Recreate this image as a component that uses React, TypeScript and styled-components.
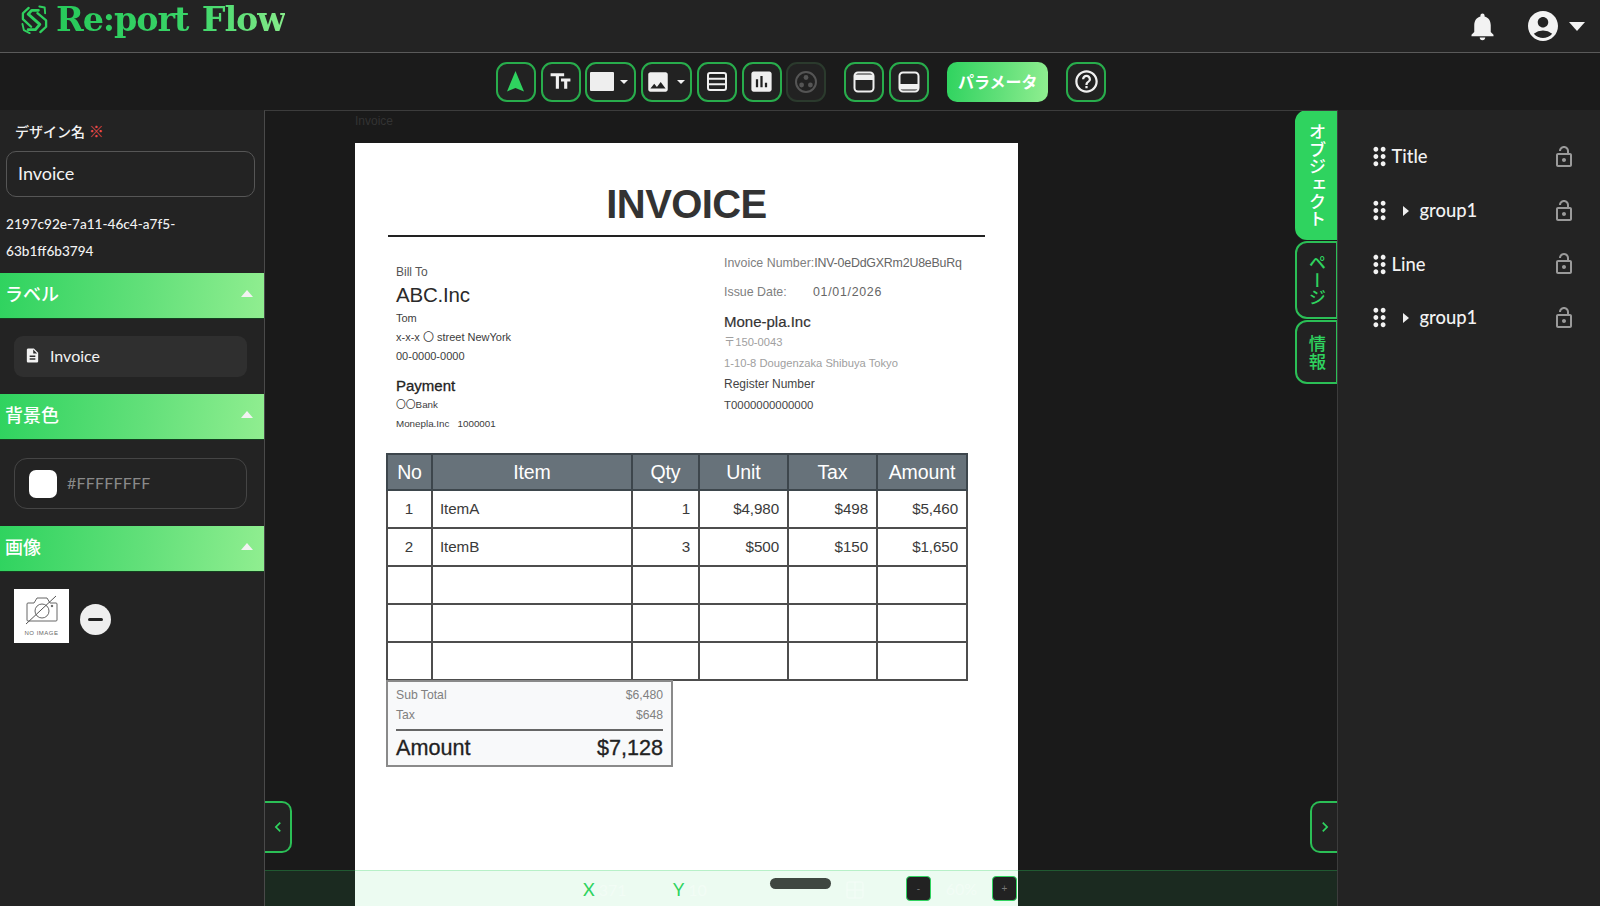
import React from "react";
import styled, { createGlobalStyle } from "styled-components";
import {
  MdTextFields,
  MdImage,
  MdInsertChart,
  MdHelpOutline,
  MdNotifications,
  MdAccountCircle,
  MdDescription,
  MdDragIndicator,
  MdOutlineLockOpen,
  MdChevronLeft,
  MdChevronRight,
} from "react-icons/md";

const UI = `Lato, "Noto Sans CJK JP", sans-serif`;
const DOC = `"Liberation Sans", "Noto Sans CJK JP", sans-serif`;
const GREEN = "#2fd35f";
const EDGE = "#2bbf56";
const GRAD = "linear-gradient(95deg,#2fd35f 0%,#63e07a 55%,#90ee90 100%)";

const Global = createGlobalStyle`
  html, body { margin: 0; padding: 0; height: 906px; overflow: hidden; background: #1a1a1a; }
  * { box-sizing: border-box; }
  #root { height: 906px; font-family: ${UI}; color: #fff; }
`;

const Page = styled.div`
  display: flex;
  flex-direction: column;
  height: 906px;
`;

const Header = styled.header`
  height: 53px;
  flex: none;
  display: flex;
  align-items: center;
  justify-content: space-between;
  padding: 0 15px 0 20px;
  background: #232323;
  border-bottom: 1px solid #5a5a5a;
`;
const Brand = styled.div`
  display: flex;
  align-items: center;
  gap: 7px;
  margin-top: -12px;
`;
const BrandName = styled.div`
  font-family: "DejaVu Serif", serif;
  font-weight: 700;
  font-size: 33.4px;
  line-height: 42px;
  letter-spacing: -1.1px;
  word-spacing: 3px;
  white-space: nowrap;
  background: linear-gradient(90deg, #27c95a 0%, #3ad568 60%, #86ea8a 100%);
  -webkit-background-clip: text;
  background-clip: text;
  color: transparent;
`;
const HeaderTools = styled.div`
  display: flex;
  align-items: center;
  color: #f2f2f2;
`;
const UserGap = styled.span`
  display: flex;
  margin: 0 8px 0 26px;
`;
const Caret = styled.span<{ $up?: boolean; $size: number }>`
  display: inline-block;
  width: 0;
  height: 0;
  border-left: ${(p) => p.$size}px solid transparent;
  border-right: ${(p) => p.$size}px solid transparent;
  border-${(p) => (p.$up ? "bottom" : "top")}: ${(p) => Math.round(p.$size * 1.1)}px solid #f2f2f2;
`;

const Toolbar = styled.div`
  height: 57px;
  flex: none;
  display: flex;
  align-items: center;
  justify-content: center;
  background: #1b1b1b;
  padding-left: 2px;
`;
const ToolGroup = styled.div`
  display: flex;
  gap: 4.8px;
  margin-right: 18px;
  &:last-child { margin-right: 0; }
`;
const ToolButton = styled.button<{ $wide?: boolean; $off?: boolean }>`
  width: ${(p) => (p.$wide ? 51 : 40)}px;
  height: 40px;
  padding: 0 ${(p) => (p.$wide ? 3 : 0)}px 0 0;
  display: flex;
  align-items: center;
  justify-content: center;
  gap: 6px;
  background: #222;
  color: ${(p) => (p.$off ? "#555" : "#f0f0f0")};
  border: 2px solid ${(p) => (p.$off ? "#2b3a2d" : "#28ad4c")};
  border-radius: 11px;
`;
const ParamButton = styled.button`
  width: 101px;
  height: 40px;
  padding: 0 0 2px;
  border: 0;
  border-radius: 10px;
  background: ${GRAD};
  color: #fff;
  font-family: ${UI};
  font-weight: 700;
  font-size: 16px;
`;
const Swatch = styled.span`
  width: 24px;
  height: 19px;
  background: #eee;
  border-radius: 1px;
`;

const Main = styled.div`
  flex: 1;
  min-height: 0;
  display: flex;
`;
const LeftPanel = styled.aside`
  width: 264px;
  flex: none;
  background: #232323;
`;
const FieldLabel = styled.div`
  height: 41px;
  padding: 11px 0 0 15px;
  font-size: 14px;
  line-height: 20px;
  font-weight: 500;
  color: #f2f2f2;
`;
const Req = styled.span`
  color: #ee4b4b;
  font-size: 15px;
`;
const NameField = styled.div`
  margin-left: 6px;
  width: 249px;
  height: 46px;
  display: flex;
  align-items: center;
  padding: 0 0 2px 11px;
  border: 1px solid #565656;
  border-radius: 10px;
  font-size: 18px;
  color: #f4f4f4;
`;
const Uuid = styled.div`
  margin: 14px 0 9px 6px;
  font-size: 13.6px;
  line-height: 26.5px;
  font-weight: 500;
  color: #f2f2f2;
`;
const SectionHead = styled.div`
  height: 46px;
  display: flex;
  align-items: center;
  justify-content: space-between;
  padding: 0 11px 5px 5px;
  background: ${GRAD};
  border-bottom: 1px solid #14401f;
  font-size: 18px;
  font-weight: 500;
  color: #fff;
`;
const SectionBody = styled.div<{ $h: number }>`
  height: ${(p) => p.$h}px;
  padding: 17px 17px 0 14px;
`;
const FileRow = styled.div`
  height: 41px;
  display: flex;
  align-items: center;
  gap: 9px;
  padding: 0 0 2px 10px;
  background: #2f2f2f;
  border-radius: 9px;
  font-size: 16px;
  color: #f2f2f2;
`;
const ColorField = styled.div`
  height: 51px;
  margin-top: 1px;
  display: flex;
  align-items: center;
  gap: 10px;
  padding-left: 14px;
  border: 1px solid #454545;
  border-radius: 13px;
  font-size: 16px;
  letter-spacing: 0.2px;
  color: #8a8a8a;
`;
const ColorText = styled.span`
  margin-top: -3px;
`;
const ColorChip = styled.span`
  width: 28px;
  height: 28px;
  background: #fff;
  border-radius: 7px;
`;
const ImageRow = styled.div`
  display: flex;
  align-items: center;
  gap: 11px;
`;
const NoImage = styled.div`
  width: 55px;
  height: 54px;
  background: #fff;
  display: flex;
  flex-direction: column;
  align-items: center;
  padding-top: 6px;
`;
const NoImageText = styled.span`
  font-family: ${DOC};
  font-size: 6px;
  line-height: 8px;
  letter-spacing: 0.5px;
  color: #666;
  margin-top: 4px;
`;
const RemoveButton = styled.button`
  width: 31px;
  height: 31px;
  margin-top: 6px;
  padding: 0;
  border: 0;
  border-radius: 50%;
  background: #eee;
  display: flex;
  align-items: center;
  justify-content: center;
  &::before {
    content: "";
    width: 15px;
    height: 3px;
    border-radius: 2px;
    background: #222;
  }
`;

const Canvas = styled.main`
  flex: 1;
  min-width: 0;
  position: relative;
  overflow: hidden;
  background: #1a1a1a;
  border-left: 1px solid #4a4a4a;
  border-top: 1px solid #3c3c3c;
  border-right: 1px solid #3c3c3c;
`;
const CanvasCaption = styled.div`
  height: 32px;
  padding: 3px 0 0 90px;
  font-family: ${DOC};
  font-size: 12px;
  line-height: 14px;
  color: #333;
`;
const Paper = styled.div`
  margin-left: 90px;
  width: 663px;
  height: 800px;
  background: #fff;
  font-family: ${DOC};
  padding-top: 36px;
`;
const DocTitle = styled.div`
  height: 50px;
  text-align: center;
  font-size: 40px;
  line-height: 50px;
  font-weight: 700;
  letter-spacing: -0.6px;
  color: #333;
`;
const DocRule = styled.div`
  margin: 6px 0 0 33px;
  width: 597px;
  height: 2px;
  background: #222;
`;
const DocColumns = styled.div`
  height: 216px;
  display: grid;
  grid-template-columns: 328px 1fr;
  padding-left: 41px;
`;
const BillColumn = styled.div`
  padding-top: 25px;
`;
const IssuerColumn = styled.div`
  padding-top: 11.5px;
`;
const DocLine = styled.div`
  white-space: pre;
`;
const BillLabel = styled(DocLine)`
  font-size: 12px;
  line-height: 20px;
  color: #555;
`;
const Company = styled(DocLine)`
  font-size: 20.5px;
  line-height: 24px;
  letter-spacing: -0.2px;
  color: #2a2a2a;
  margin: 1px 0 2px;
`;
const Contact = styled(DocLine)`
  font-size: 11px;
  line-height: 19px;
  color: #3c3c3c;
`;
const PayTitle = styled(DocLine)`
  font-size: 15px;
  line-height: 20px;
  font-weight: 500;
  -webkit-text-stroke: 0.3px #222;
  color: #222;
  margin-top: 10px;
`;
const BankLine = styled(DocLine)`
  font-size: 9.8px;
  line-height: 18.5px;
  color: #3c3c3c;
`;
const MetaLine = styled(DocLine)`
  font-size: 12.4px;
  line-height: 29px;
  color: #808080;
  display: flex;
`;
const MetaKey = styled.span`
  width: 89px;
`;
const MetaValue = styled.span<{ $track: number }>`
  letter-spacing: ${(p) => p.$track}px;
  color: #666;
`;
const Issuer = styled(DocLine)`
  margin-top: 5px;
  font-size: 15px;
  line-height: 20px;
  -webkit-text-stroke: 0.2px #333;
  color: #333;
`;
const Muted = styled(DocLine)`
  font-size: 11.2px;
  line-height: 21.5px;
  color: #a0a0a0;
`;
const RegLabel = styled(DocLine)`
  font-size: 12px;
  line-height: 19px;
  color: #444;
`;
const RegNumber = styled(DocLine)`
  font-size: 11.4px;
  line-height: 23px;
  color: #444;
`;
const ItemTable = styled.table`
  margin-left: 31px;
  width: 580px;
  table-layout: fixed;
  border-collapse: collapse;
  border: 2px solid #808080;
`;
const HeadRow = styled.tr`
  height: 36px;
`;
const BodyRow = styled.tr`
  height: 38px;
`;
const Th = styled.th`
  background: #67727a;
  border: 2px solid #3d464c;
  padding: 0;
  color: #fff;
  font-size: 19.5px;
  letter-spacing: -0.1px;
  font-weight: 400;
`;
const Td = styled.td<{ $align: string }>`
  border: 2px solid #4d4d4d;
  padding: 0 8px 2px 7px;
  font-size: 15.2px;
  letter-spacing: -0.1px;
  color: #3a3a3a;
  text-align: ${(p) => p.$align};
`;
const Totals = styled.div`
  margin: -1px 0 0 31px;
  width: 287px;
  height: 87px;
  background: #f8f9fa;
  border: 2px solid #8a8a8a;
  padding: 3px 8px 0;
`;
const TotalRow = styled.div`
  display: flex;
  justify-content: space-between;
  font-size: 12.2px;
  line-height: 20px;
  color: #808080;
`;
const GrandRow = styled.div`
  display: flex;
  justify-content: space-between;
  margin-top: 4px;
  border-top: 2px solid #666;
  font-size: 21.6px;
  line-height: 33px;
  -webkit-text-stroke: 0.3px #222;
  color: #222;
`;

const Tabs = styled.nav`
  position: absolute;
  top: -1px;
  right: 0;
  width: 42px;
  display: flex;
  flex-direction: column;
  gap: 1px;
`;
const Tab = styled.div<{ $active?: boolean; $h: number }>`
  height: ${(p) => p.$h}px;
  display: flex;
  align-items: center;
  justify-content: center;
  writing-mode: vertical-rl;
  font-size: 17.4px;
  line-height: 19px;
  font-weight: 500;
  border-radius: 12px 0 0 12px;
  background: ${(p) => (p.$active ? GREEN : "#222")};
  color: ${(p) => (p.$active ? "#fff" : GREEN)};
  border: 2px solid ${(p) => (p.$active ? GREEN : EDGE)};
  border-right-width: 1px;
`;
const SideToggle = styled.button<{ $right?: boolean }>`
  position: absolute;
  top: 690px;
  ${(p) => (p.$right ? "right: 0;" : "left: 0;")}
  width: 27px;
  height: 52px;
  padding: 0;
  display: flex;
  align-items: center;
  justify-content: center;
  background: #222;
  color: ${GREEN};
  border: 2px solid ${EDGE};
  border-${(p) => (p.$right ? "right" : "left")}: 0;
  border-radius: ${(p) => (p.$right ? "10px 0 0 10px" : "0 10px 10px 0")};
`;
const StatusBar = styled.div`
  position: absolute;
  left: 0;
  right: 0;
  bottom: 0;
  height: 36px;
  display: flex;
  align-items: center;
  padding-left: 318px;
  background: rgba(47, 211, 95, 0.09);
  border-top: 1px solid rgba(47, 211, 95, 0.28);
`;
const Coord = styled.div<{ $w: number }>`
  width: ${(p) => p.$w}px;
  flex: none;
  font-size: 18px;
  color: ${GREEN};
`;
const CoordValue = styled.span`
  margin-left: 4px;
  font-size: 16px;
  color: rgba(255, 255, 255, 0.35);
`;
const Handle = styled.div`
  width: 61px;
  height: 11px;
  margin: -11px 14px 0 7px;
  border-radius: 6px;
  background: #3f4741;
`;
const FaintIcon = styled.span`
  width: 61px;
  flex: none;
  color: rgba(255, 255, 255, 0.3);
  display: flex;
`;
const ZoomButton = styled.button`
  width: 25px;
  height: 25px;
  padding: 0;
  background: #222;
  color: #777;
  font-size: 10px;
  border: 1px solid ${GREEN};
  border-radius: 4px;
  flex: none;
`;
const ZoomValue = styled.span`
  width: 61px;
  flex: none;
  text-align: center;
  font-size: 16px;
  color: rgba(255, 255, 255, 0.35);
`;

const RightPanel = styled.aside`
  width: 262px;
  flex: none;
  background: #232323;
  padding: 20px 24px 0 26.5px;
`;
const ObjectRow = styled.div`
  height: 53.7px;
  display: flex;
  align-items: center;
  font-size: 18.4px;
  font-weight: 500;
  color: #f2f2f2;
`;
const ObjectName = styled.span`
  flex: 1;
  margin: -1px 0 0 -2px;
`;
const GroupArrow = styled.span`
  width: 0;
  height: 0;
  margin: 0 13px 0 9px;
  border-top: 5.5px solid transparent;
  border-bottom: 5.5px solid transparent;
  border-left: 6px solid #eee;
`;
const LockIcon = styled.span`
  display: flex;
  color: #9a9a9a;
`;

const Logo = () => (
  <svg width="29" height="32" viewBox="0 0 30 32" fill="none">
    <g stroke="#2fcf5e" strokeLinejoin="round" strokeLinecap="round">
      <path d="M19 6H12L8.5 10L20.5 20.5L16 26H8.5" strokeWidth="3" />
      <path d="M9 3.5L3 9V15L11.5 23" strokeWidth="2.4" />
      <path d="M21 28.5L27 23V16.5L18 9" strokeWidth="2.4" />
      <path d="M20 2L25.5 3L26 9" strokeWidth="2" />
      <path d="M2.5 20L4 26.5L10 29.5" strokeWidth="2" />
    </g>
  </svg>
);
const Arrow = () => (
  <svg width="17" height="21" viewBox="0 0 17 21">
    <path d="M8.5 0L17 20.5 8.5 17 0 20.5z" fill="#2fd35f" />
  </svg>
);
const Rows = () => (
  <svg width="22" height="21" viewBox="0 0 22 21" fill="none" stroke="#f0f0f0" strokeWidth="2">
    <rect x="2" y="2" width="18" height="17" rx="2" />
    <path d="M2 7.7H20M2 13.3H20" />
  </svg>
);
const Orbit = () => (
  <svg width="24" height="24" viewBox="0 0 24 24" fill="none">
    <circle cx="12" cy="12" r="10" stroke="#555" strokeWidth="2" />
    <circle cx="12" cy="7.5" r="2.4" fill="#555" />
    <circle cx="7.6" cy="15" r="2.4" fill="#555" />
    <circle cx="16.4" cy="15" r="2.4" fill="#555" />
  </svg>
);
const Band = ({ bottom }: { bottom?: boolean }) => (
  <svg width="22" height="22" viewBox="0 0 22 22" fill="none">
    <rect x="1.5" y={bottom ? 13 : 3.5} width="19" height={5.5} fill="#f0f0f0" />
    <rect x="1.5" y="1.5" width="19" height="19" rx="3.5" stroke="#f0f0f0" strokeWidth="2" />
  </svg>
);
const NoCamera = () => (
  <svg width="34" height="30" viewBox="0 0 34 30" fill="none" stroke="#555" strokeWidth="0.9">
    <path d="M3 8h6l3-5h10l3 5h6a1 1 0 0 1 1 1v16a1 1 0 0 1-1 1H3a1 1 0 0 1-1-1V9a1 1 0 0 1 1-1z" />
    <circle cx="17" cy="16" r="7" />
    <path d="M1 29L31 1" strokeWidth="1" />
    <circle cx="27" cy="11" r="0.8" fill="#555" />
  </svg>
);
const Grid = () => (
  <svg width="20" height="22" viewBox="0 0 20 22" fill="none" stroke="currentColor" strokeWidth="1.4">
    <rect x="2" y="4" width="16" height="16" rx="2" />
    <path d="M2 12H18M10 4V20" />
  </svg>
);

const objects = [
  { name: "Title", group: false },
  { name: "group1", group: true },
  { name: "Line", group: false },
  { name: "group1", group: true },
];
const rows: string[][] = [
  ["1", "ItemA", "1", "$4,980", "$498", "$5,460"],
  ["2", "ItemB", "3", "$500", "$150", "$1,650"],
  ["", "", "", "", "", ""],
  ["", "", "", "", "", ""],
  ["", "", "", "", "", ""],
];
const widths = [45, 200, 67, 89, 89, 90];
const heads = ["No", "Item", "Qty", "Unit", "Tax", "Amount"];

export default function App() {
  return (
    <Page>
      <Global />
      <Header>
        <Brand>
          <Logo />
          <BrandName>Re:port Flow</BrandName>
        </Brand>
        <HeaderTools>
          <MdNotifications size={33} />
          <UserGap>
            <MdAccountCircle size={36} />
          </UserGap>
          <Caret $size={8} />
        </HeaderTools>
      </Header>
      <Toolbar>
        <ToolGroup>
          <ToolButton><Arrow /></ToolButton>
          <ToolButton><MdTextFields size={25} /></ToolButton>
          <ToolButton $wide><Swatch /><Caret $size={4} /></ToolButton>
          <ToolButton $wide><MdImage size={26} /><Caret $size={4} /></ToolButton>
          <ToolButton><Rows /></ToolButton>
          <ToolButton><MdInsertChart size={27} /></ToolButton>
          <ToolButton $off><Orbit /></ToolButton>
        </ToolGroup>
        <ToolGroup>
          <ToolButton><Band /></ToolButton>
          <ToolButton><Band bottom /></ToolButton>
        </ToolGroup>
        <ToolGroup>
          <ParamButton>パラメータ</ParamButton>
        </ToolGroup>
        <ToolGroup>
          <ToolButton><MdHelpOutline size={27} /></ToolButton>
        </ToolGroup>
      </Toolbar>
      <Main>
        <LeftPanel>
          <FieldLabel>デザイン名<Req> ※</Req></FieldLabel>
          <NameField>Invoice</NameField>
          <Uuid>
            2197c92e-7a11-46c4-a7f5-
            <br />
            63b1ff6b3794
          </Uuid>
          <SectionHead>ラベル<Caret $up $size={6.5} /></SectionHead>
          <SectionBody $h={75}>
            <FileRow><MdDescription size={17} />Invoice</FileRow>
          </SectionBody>
          <SectionHead>背景色<Caret $up $size={6.5} /></SectionHead>
          <SectionBody $h={86}>
            <ColorField><ColorChip /><ColorText>#FFFFFFFF</ColorText></ColorField>
          </SectionBody>
          <SectionHead>画像<Caret $up $size={6.5} /></SectionHead>
          <SectionBody $h={120}>
            <ImageRow>
              <NoImage>
                <NoCamera />
                <NoImageText>NO IMAGE</NoImageText>
              </NoImage>
              <RemoveButton aria-label="remove" />
            </ImageRow>
          </SectionBody>
        </LeftPanel>
        <Canvas>
          <CanvasCaption>Invoice</CanvasCaption>
          <Paper>
            <DocTitle>INVOICE</DocTitle>
            <DocRule />
            <DocColumns>
              <BillColumn>
                <BillLabel>Bill To</BillLabel>
                <Company>ABC.Inc</Company>
                <Contact>Tom</Contact>
                <Contact>x-x-x 〇 street NewYork</Contact>
                <Contact>00-0000-0000</Contact>
                <PayTitle>Payment</PayTitle>
                <BankLine>〇〇Bank</BankLine>
                <BankLine>Monepla.Inc   1000001</BankLine>
              </BillColumn>
              <IssuerColumn>
                <MetaLine>Invoice Number:<MetaValue $track={-0.2}>INV-0eDdGXRm2U8eBuRq</MetaValue></MetaLine>
                <MetaLine><MetaKey>Issue Date:</MetaKey><MetaValue $track={0.7}>01/01/2026</MetaValue></MetaLine>
                <Issuer>Mone-pla.Inc</Issuer>
                <Muted>〒150-0043</Muted>
                <Muted>1-10-8 Dougenzaka Shibuya Tokyo</Muted>
                <RegLabel>Register Number</RegLabel>
                <RegNumber>T0000000000000</RegNumber>
              </IssuerColumn>
            </DocColumns>
            <ItemTable>
              <colgroup>
                {widths.map((w, i) => (
                  <col key={i} width={w} />
                ))}
              </colgroup>
              <thead>
                <HeadRow>
                  {heads.map((h) => (
                    <Th key={h}>{h}</Th>
                  ))}
                </HeadRow>
              </thead>
              <tbody>
                {rows.map((r, i) => (
                  <BodyRow key={i}>
                    {r.map((c, j) => (
                      <Td key={j} $align={j === 0 ? "center" : j === 1 ? "left" : "right"}>{c}</Td>
                    ))}
                  </BodyRow>
                ))}
              </tbody>
            </ItemTable>
            <Totals>
              <TotalRow><span>Sub Total</span><span>$6,480</span></TotalRow>
              <TotalRow><span>Tax</span><span>$648</span></TotalRow>
              <GrandRow><span>Amount</span><span>$7,128</span></GrandRow>
            </Totals>
          </Paper>
          <Tabs>
            <Tab $active $h={130}>オブジェクト</Tab>
            <Tab $h={78}>ページ</Tab>
            <Tab $h={64}>情報</Tab>
          </Tabs>
          <SideToggle aria-label="collapse left"><MdChevronLeft size={20} /></SideToggle>
          <SideToggle $right aria-label="collapse right"><MdChevronRight size={20} /></SideToggle>
          <StatusBar>
            <Coord $w={90}>X<CoordValue>371</CoordValue></Coord>
            <Coord $w={90}>Y<CoordValue>10</CoordValue></Coord>
            <Handle />
            <FaintIcon><Grid /></FaintIcon>
            <ZoomButton>-</ZoomButton>
            <ZoomValue>60%</ZoomValue>
            <ZoomButton>+</ZoomButton>
          </StatusBar>
        </Canvas>
        <RightPanel>
          {objects.map((o, i) => (
            <ObjectRow key={i}>
              <MdDragIndicator size={29} />
              {o.group && <GroupArrow />}
              <ObjectName>{o.name}</ObjectName>
              <LockIcon><MdOutlineLockOpen size={24} /></LockIcon>
            </ObjectRow>
          ))}
        </RightPanel>
      </Main>
    </Page>
  );
}
